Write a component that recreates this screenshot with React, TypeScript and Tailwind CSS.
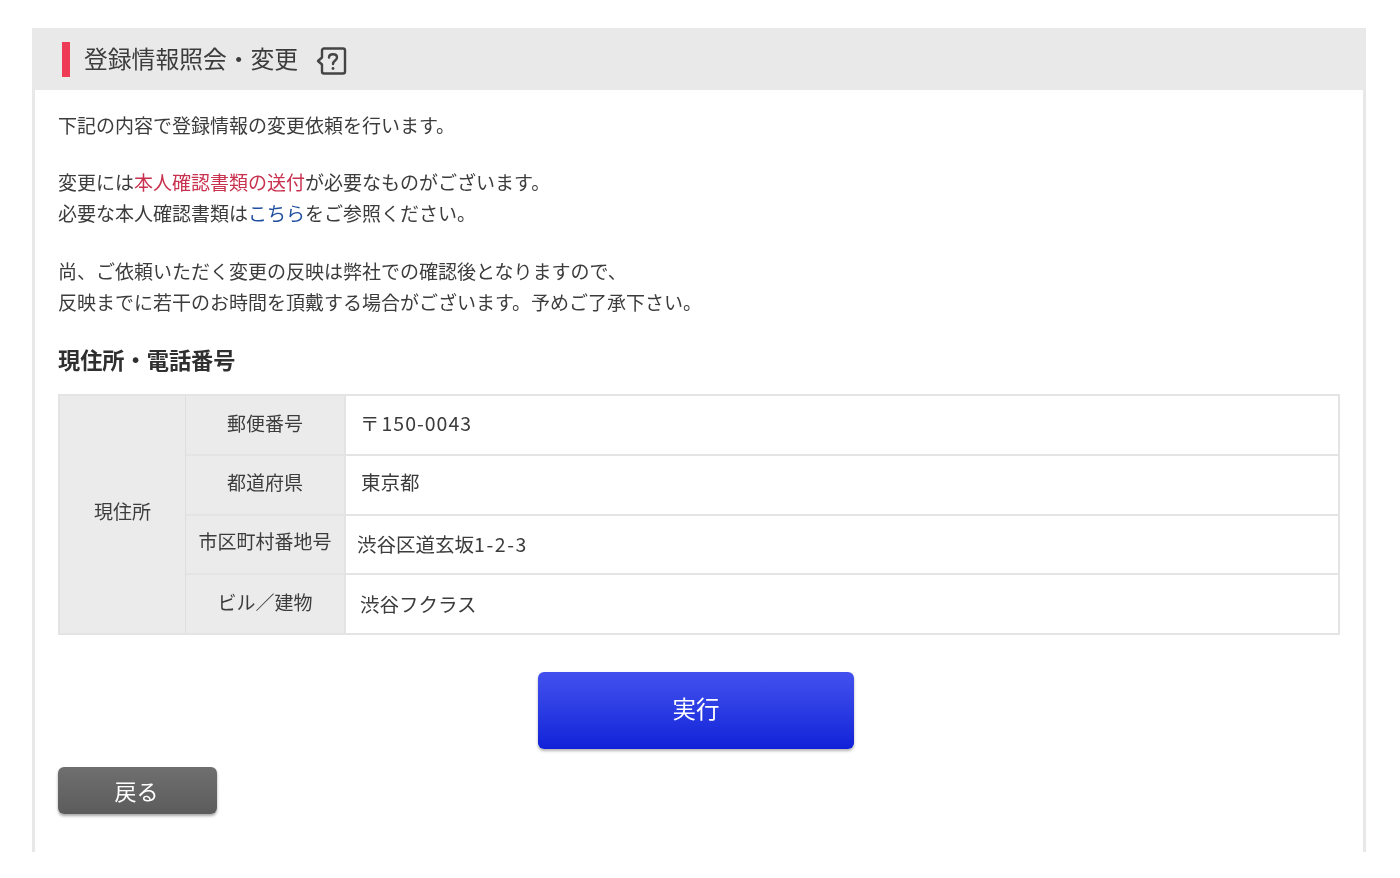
const rows = [
  { label: "郵便番号", value: <>〒 <span className="ml-[2px] tracking-[1px]">150-0043</span></>, rowClass: "h-[58px]", labelClass: "pb-[6px]", valueClass: "pl-[14px] pb-[6px]" },
  { label: "都道府県", value: "東京都", rowClass: "h-[60px] border-t-2", labelClass: "pb-[8px]", valueClass: "pl-[15px] pb-[8px]" },
  { label: "市区町村番地号", value: <>渋谷区道玄坂<span className="tracking-[1.600px]">1-2-3</span></>, rowClass: "h-[59px] border-t-2", labelClass: "pb-[9px]", valueClass: "pl-[11px] pb-[3px]" },
  { label: "ビル／建物", value: "渋谷フクラス", rowClass: "h-[60px] border-t-2", labelClass: "pb-[6px]", valueClass: "pl-[14px] pb-[2px]" },
];

const HelpIcon = () => (
  <svg width="32" height="28" viewBox="0 0 32 28" fill="none" stroke="#444" strokeWidth="2.4">
    <path d="M7 3.500a2 2 0 0 1 2-2h19a2 2 0 0 1 2 2v21a2 2 0 0 1-2 2H9a2 2 0 0 1-2-2v-7l-4-3.500 4-3.500z" strokeLinejoin="round" />
    <path d="M14 10.500c0-2 1.800-3.200 4-3.200s4 1.200 4 3.200c0 3-4 3-4 6.500" strokeLinecap="round" />
    <circle cx="18" cy="21.500" r="1.400" fill="#444" stroke="none" />
  </svg>
);

const App = () => {
  return (
    <div className="h-[878px] w-[1400px] bg-white pl-[32px] pt-[28px] font-['Noto_Sans_CJK_JP',sans-serif] text-[#3c3c3c] blur-[0.4px]">
      <div className="h-[824px] w-[1334px] border-x-[3px] border-[#e8e8e8]">
        <div className="-mx-[3px] flex h-[62px] items-center bg-[#e9e9e9] pl-[30px]">
          <span className="h-[35px] w-[8px] bg-[#ee3a55]" />
          <h1 className="mb-[2px] ml-[14px] text-[23.800px] leading-none">登録情報照会・変更</h1>
          <span className="ml-[17px] mt-[3px]">
            <HelpIcon />
          </span>
        </div>

        <div className="px-[23px] pt-[19px] text-[19px] leading-[31px]">
          <p className="h-[31px]">下記の内容で登録情報の変更依頼を行います。</p>
          <p className="mt-[26px]">
            変更には<span className="text-[#c8324f]">本人確認書類の送付</span>が必要なものがございます。
            <br />
            必要な本人確認書類は<span className="text-[#1f4f9e]">こちら</span>をご参照ください。
          </p>
          <p className="mt-[27px]">
            尚、ご依頼いただく変更の反映は弊社での確認後となりますので、
            <br />
            反映までに若干のお時間を頂戴する場合がございます。予めご了承下さい。
          </p>

          <h2 className="mt-[27px] text-[22.200px] font-bold leading-[31px] text-[#2f2f2f]">現住所・電話番号</h2>

          <div className="mt-[19px] flex h-[241px] w-[1282px] border-2 border-[#e4e4e4]">
            <div className="flex w-[125px] items-center justify-center bg-[#ebebeb] pb-[9px] text-[19px]">現住所</div>
            <div className="flex-1 border-l border-[#dedede]">
              {rows.map((row) => (
                <div key={row.label} className={`flex border-[#e4e4e4] ${row.rowClass}`}>
                  <div className={`flex w-[158px] items-center justify-center bg-[#ebebeb] text-[19px] ${row.labelClass}`}>{row.label}</div>
                  <div className={`flex flex-1 items-center border-l-2 border-[#e4e4e4] bg-white text-[19.500px] ${row.valueClass}`}>
                    {row.value}
                  </div>
                </div>
              ))}
            </div>
          </div>

          <div className="mt-[37px] flex justify-center">
            <button className="mr-[6px] h-[77px] w-[316px] rounded-[6px] bg-gradient-to-b from-[#4350ee] to-[#1020d8] pb-[5px] text-[23.500px] text-white shadow-[0_2px_3px_rgba(0,0,0,0.3)]">
              実行
            </button>
          </div>

          <button className="mt-[18px] block h-[47px] w-[159px] rounded-[6px] bg-gradient-to-b from-[#6f6f6f] to-[#5c5c5c] pb-[1px] pr-[2px] text-[22px] text-white shadow-[0_2px_3px_rgba(0,0,0,0.35)]">
            戻る
          </button>
        </div>
      </div>
    </div>
  );
};

export default App;
